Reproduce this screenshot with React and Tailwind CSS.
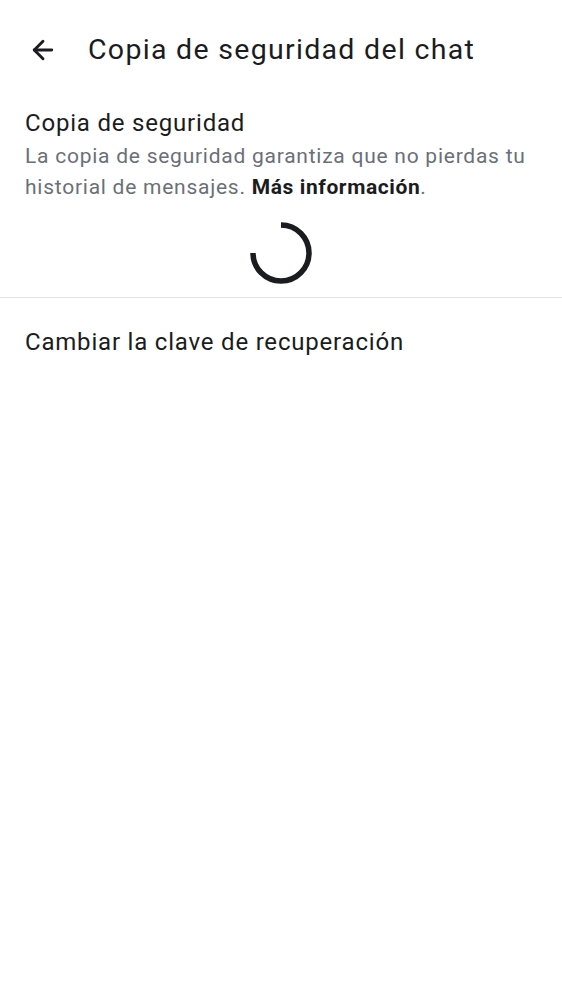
import { ArrowLeft } from "lucide-react";

export default function App() {
  return (
    <div className="min-h-screen bg-white text-[#1b1c20]" style={{ fontFamily: "Roboto, sans-serif" }}>
      <header className="flex items-center h-[100px] px-[28px]">
        <ArrowLeft size={30} strokeWidth={2.3} className="text-[#1b1c20]" />
        <h1 className="ml-[30px] text-[28.5px] leading-none tracking-[1.3px]">Copia de seguridad del chat</h1>
      </header>

      <section className="px-[25px]">
        <h2 className="text-[24px] leading-[30px] mt-[8px] tracking-[0.8px]">Copia de seguridad</h2>
        <p className="mt-[3px] text-[21px] leading-[31px] text-[#6b6f77] tracking-[0.75px]">
          La copia de seguridad garantiza que no pierdas tu historial de mensajes.{" "}
          <span className="font-bold text-[#1b1c20] tracking-[0.6px]">Más información</span>.
        </p>
        <div className="flex justify-center pt-[17px] pb-[11px]">
          <svg width="66" height="66" viewBox="0 0 66 66" fill="none">
            <path
              d="M33 5 A28 28 0 1 1 5 33"
              stroke="#1b1c20"
              strokeWidth="5.5"
            />
          </svg>
        </div>
      </section>

      <div className="h-px bg-[#e3e3e3]" />

      <div className="px-[25px] pt-[28px] text-[24px] leading-[32px] tracking-[0.8px]">Cambiar la clave de recuperación</div>
    </div>
  );
}
